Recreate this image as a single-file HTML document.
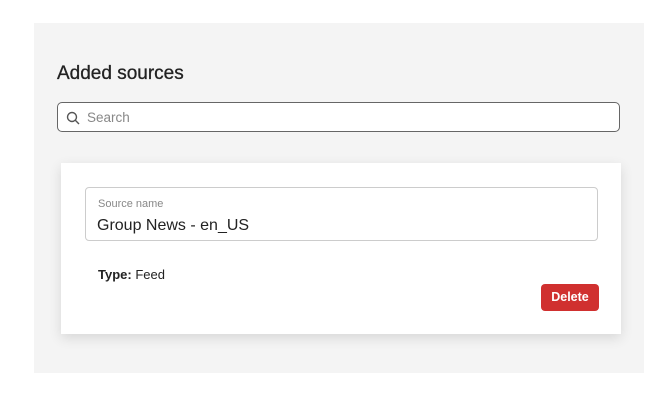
<!DOCTYPE html>
<html><head><style>
body{margin:0;width:670px;height:418px;background:#fff;font-family:"Liberation Sans",sans-serif;position:relative;overflow:hidden}
.panel{position:absolute;left:34px;top:23px;width:610px;height:350px;background:#f4f4f4}
h1{position:absolute;left:57px;top:63px;margin:0;font-size:19px;font-weight:normal;color:#222;-webkit-text-stroke:0.3px #222}
.search{position:absolute;left:57px;top:102px;width:561px;height:28px;border:1.5px solid #666;border-radius:5px;background:#fff}
.search span{position:absolute;left:29px;top:7px;font-size:13.5px;color:#888}
.card{position:absolute;left:61px;top:163px;width:560px;height:171px;background:#fff;box-shadow:0 4px 12px rgba(0,0,0,.12)}
.field{position:absolute;left:24px;top:24px;width:511px;height:52px;border:1px solid #ccc;border-radius:4px}
.lbl{position:absolute;left:12px;top:10px;font-size:11px;color:#888}
.val{position:absolute;left:11px;top:29px;font-size:16px;color:#222}
.type{position:absolute;left:37px;top:104px;font-size:13px;color:#222}
.btn{position:absolute;left:480px;top:121px;width:58px;height:27px;background:#d0302f;border-radius:4px;color:#fff;font-size:12.5px;font-weight:bold;text-align:center;line-height:27px}
</style></head><body>
<div class="panel"></div>
<h1>Added sources</h1>
<div class="search"><svg style="position:absolute;left:8px;top:8px" width="14" height="14" viewBox="0 0 14 14"><circle cx="6" cy="6" r="4.5" fill="none" stroke="#555" stroke-width="1.4"/><line x1="9.3" y1="9.3" x2="13" y2="13" stroke="#555" stroke-width="1.4"/></svg><span>Search</span></div>
<div class="card">
<div class="field"><div class="lbl">Source name</div><div class="val">Group News - en_US</div></div>
<div class="type"><b>Type:</b> Feed</div>
<div class="btn">Delete</div>
</div>
</body></html>
